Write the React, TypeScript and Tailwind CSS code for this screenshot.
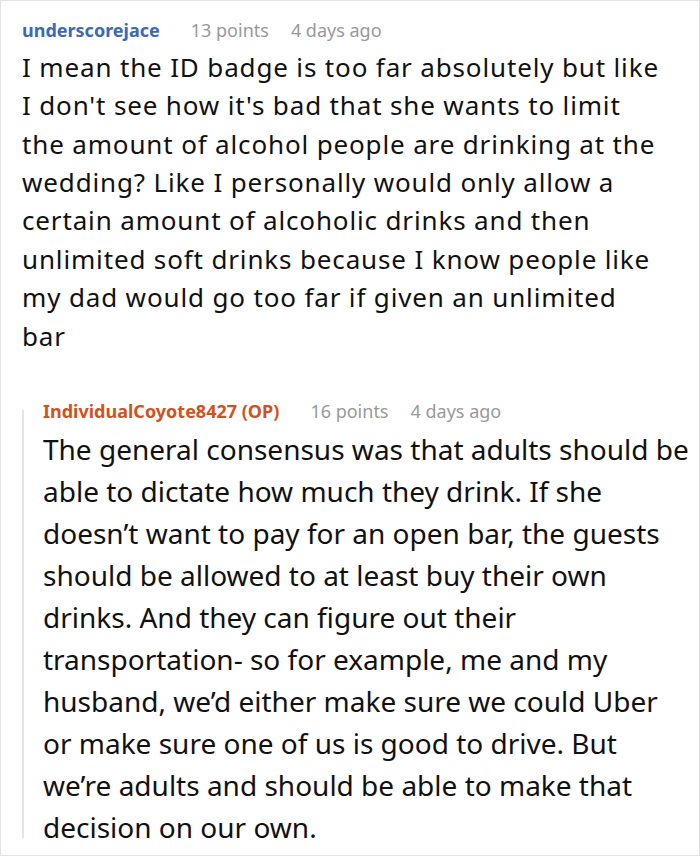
import React from "react";

type CommentData = {
  author: string;
  op?: boolean;
  points: number;
  age: string;
  body: string;
};

const top: CommentData = {
  author: "underscorejace",
  points: 13,
  age: "4 days ago",
  body:
    "I mean the ID badge is too far absolutely but like I don't see how it's bad that she wants to limit the amount of alcohol people are drinking at the wedding? Like I personally would only allow a certain amount of alcoholic drinks and then unlimited soft drinks because I know people like my dad would go too far if given an unlimited bar",
};

const reply: CommentData = {
  author: "IndividualCoyote8427",
  op: true,
  points: 16,
  age: "4 days ago",
  body:
    "The general consensus was that adults should be able to dictate how much they drink. If she doesn\u2019t want to pay for an open bar, the guests should be allowed to at least buy their own drinks. And they can figure out their transportation- so for example, me and my husband, we\u2019d either make sure we could Uber or make sure one of us is good to drive. But we\u2019re adults and should be able to make that decision on our own.",
};

function Meta({ c }: { c: CommentData }) {
  return (
    <div className="flex items-center text-[18px] leading-[24px] whitespace-nowrap">
      <span className={c.op ? "font-bold text-[#d0521c]" : "font-bold text-[#3a69b8]"}>
        {c.author}
        {c.op ? " (OP)" : ""}
      </span>
      <span className="ml-[31px] text-[#999999]">{c.points} points</span>
      <span className="ml-[22px] text-[#999999]">{c.age}</span>
    </div>
  );
}

export default function App() {
  return (
    <div
      className="w-[700px] h-[856px] overflow-hidden bg-white border border-[#e3e3e3] pl-[21px] pt-[17px] text-[#111111]"
      style={{ fontFamily: '"Noto Sans", "Open Sans", sans-serif' }}
    >
      <Meta c={top} />
      {/* top-level comment body */}
      <p className="mt-[5.8px] w-[640px] text-[26px] leading-[38.4px] tracking-[0.85px]">{top.body}</p>
      {/* reply thread */}
      <div className="mt-[55.4px] flex flex-col border-l-2 border-[#e5e5e5] pl-[19px]">
        <div className="-mt-[11px]">
          <Meta c={reply} />
        </div>
        <p className="mt-[4.4px] -mb-[10px] w-[648px] text-[28px] leading-[42px]">{reply.body}</p>
      </div>
    </div>
  );
}
